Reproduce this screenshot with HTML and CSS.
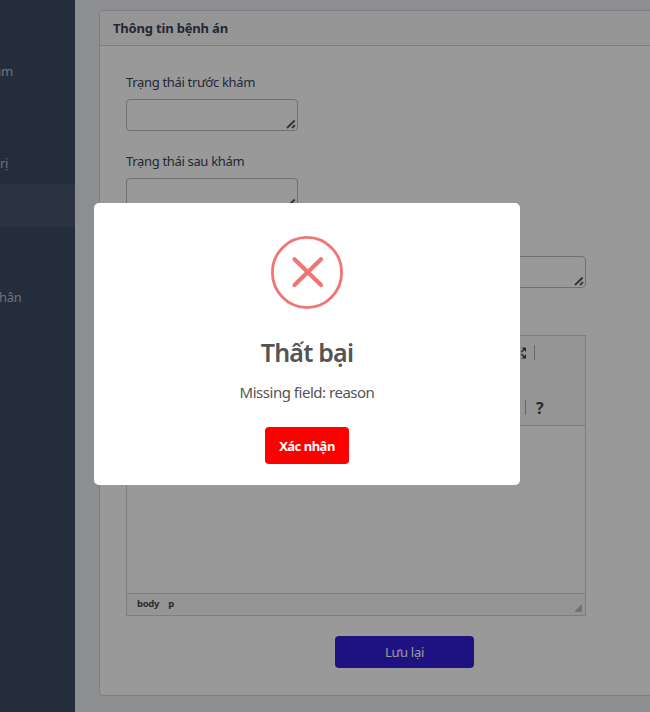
FILE: index.html
```html
<!DOCTYPE html>
<html lang="vi">
<head>
<meta charset="utf-8">
<title>Thông tin bệnh án</title>
<link rel="stylesheet" href="styles.css">
</head>
<body>
<div class="app">
  <nav class="sidebar">
    <a class="nav-item first"><span>ám</span></a>
    <a class="nav-item second"><span>rị</span></a>
    <a class="nav-item active"></a>
    <a class="nav-item third"><span>hân</span></a>
  </nav>
  <main class="main">
    <section class="card">
      <header class="card-header">Thông tin bệnh án</header>
      <div class="card-body">
        <label class="label">Trạng thái trước khám</label>
        <div class="textarea"><svg class="grip" viewBox="0 0 10 10"><path d="M1 9 8.700 1.500M6 9 9 6.200"/></svg></div>
        <label class="label">Trạng thái sau khám</label>
        <div class="textarea"><svg class="grip" viewBox="0 0 10 10"><path d="M1 9 8.700 1.500M6 9 9 6.200"/></svg></div>
        <div class="textarea wide"><svg class="grip" viewBox="0 0 10 10"><path d="M1 9 8.700 1.500M6 9 9 6.200"/></svg></div>
        <div class="editor">
          <div class="toolbar">
            <div class="tool-row">
              <svg class="maximize" viewBox="0 0 12 12"><path d="M12 0v5L7 0zM12 12V7l-5 5zM0 0h5L0 5zM0 12V7l5 5z"/><path class="arms" d="M2 2l3 3M10 2 7 5M2 10l3-3M10 10 7 7"/></svg>
              <i class="separator"></i>
            </div>
            <div class="tool-row bottom">
              <i class="separator"></i>
              <span class="help">?</span>
            </div>
          </div>
          <div class="content"></div>
          <div class="status"><span>body</span><span>p</span><i class="corner"></i></div>
        </div>
        <button class="save">Lưu lại</button>
      </div>
    </section>
  </main>
</div>
<div class="overlay">
  <div class="modal">
    <svg class="error-icon" viewBox="0 0 72 73"><ellipse cx="36" cy="36.5" rx="34.6" ry="35.1"/><path d="M23.500 23.300 50 49M50 23.300 23.500 49"/></svg>
    <h2 class="title">Thất bại</h2>
    <p class="message">Missing field: reason</p>
    <button class="confirm">Xác nhận</button>
  </div>
</div>
</body>
</html>
```
FILE: styles.css
```css
* { box-sizing: border-box; }
body {
  margin: 0;
  height: 712px;
  overflow: hidden;
  background: #ebedef;
  color: #3c4b64;
  font: 13px/20px "Noto Sans", "Open Sans", sans-serif;
}
button { border: 0; padding: 0; font: inherit; }
.app { display: flex; height: 712px; width: 680px; }
.sidebar {
  width: 75px;
  flex: none;
  overflow: hidden;
  background: #3c4b64;
  color: #b8bdc6;
  padding-top: 49px;
}
.nav-item { display: flex; align-items: center; height: 43px; letter-spacing: -.3px; }
.first span { margin-left: -6px; }
.second { margin-top: 49px; }
.active { background: #48546b; }
.third { margin-top: 48px; }
.third span { margin-left: -1px; }
.main { flex: 1; padding: 10px 0 0 24px; }
.card {
  height: 686px;
  background: #fff;
  border: 1px solid #d0d2d7;
  border-radius: 4px;
}
.card-header {
  height: 35px;
  padding: 7px 13px;
  border-bottom: 1px solid #d0d2d7;
  border-radius: 4px 4px 0 0;
  background: #f8f8f9;
  color: #3b4458;
  font-weight: 700;
  letter-spacing: -.18px;
}
.card-body { padding: 26px 26px 0; }
.label { display: block; height: 27px; color: #3b4458; letter-spacing: -.33px; }
.textarea {
  display: flex;
  align-items: flex-end;
  justify-content: flex-end;
  width: 172px;
  height: 32px;
  margin-bottom: 20px;
  padding: 0 1px 1px 0;
  border: 1px solid #b9bac9;
  border-radius: 4px;
}
.wide { width: 460px; margin: 46px 0 47px; }
.grip { width: 10px; height: 10px; fill: none; stroke: #555; stroke-width: 1.8; }
.editor { width: 460px; height: 281px; border: 1px solid #d1d1d1; }
.toolbar { height: 90px; padding-top: 5px; background: #f8f8f8; border-bottom: 1px solid #d1d1d1; }
.tool-row { display: flex; align-items: center; height: 23px; padding-left: 388px; }
.bottom { margin-top: 32px; padding-left: 398px; }
.maximize { width: 11px; height: 12px; fill: #484848; }
.arms { stroke: #484848; stroke-width: 1.6; }
.separator { width: 1px; height: 15px; background: #aaa; }
.maximize + .separator { margin-left: 8px; }
.help { margin-left: 10px; color: #484848; font: 700 16px/20px "Noto Sans", sans-serif; }
.content { height: 167px; }
.status {
  display: flex;
  height: 22px;
  padding: 0 3px 0 10px;
  border-top: 1px solid #d1d1d1;
  background: #f8f8f8;
  color: #484848;
  font: 700 9.500px/20px "Noto Sans", sans-serif;
  letter-spacing: -.3px;
  gap: 9px;
}
.corner {
  align-self: flex-end;
  margin: 0 0 3px auto;
  border-left: 8px solid transparent;
  border-bottom: 8px solid #bcbcbc;
}
.save {
  display: block;
  width: 139px;
  height: 32px;
  margin: 20px 0 0 209px;
  border-radius: 4px;
  background: #321fdb;
  color: #fff;
  letter-spacing: -.3px;
}
.overlay {
  position: absolute;
  inset: 0;
  padding: 203px 0 0 94px;
  background: rgba(0, 0, 0, .4);
}
.modal {
  display: flex;
  flex-direction: column;
  align-items: center;
  width: 426px;
  height: 282px;
  padding-top: 33px;
  border-radius: 5px;
  background: #fff;
  color: #545454;
}
.error-icon { width: 72px; height: 73px; fill: none; stroke: #f27474; stroke-width: 2.800; }
.error-icon path { stroke-width: 4.200; stroke-linecap: round; }
.title { margin: 23px 0 0; font-size: 25px; line-height: 40px; font-weight: 600; letter-spacing: -.8px; }
.message { margin: 8px 0 0; font-size: 15px; line-height: 24px; letter-spacing: -.48px; }
.confirm {
  width: 84px;
  height: 37px;
  margin-top: 23px;
  border-radius: 4px;
  background: #f00;
  color: #fff;
  font-weight: 700;
  letter-spacing: -.5px;
}
```
